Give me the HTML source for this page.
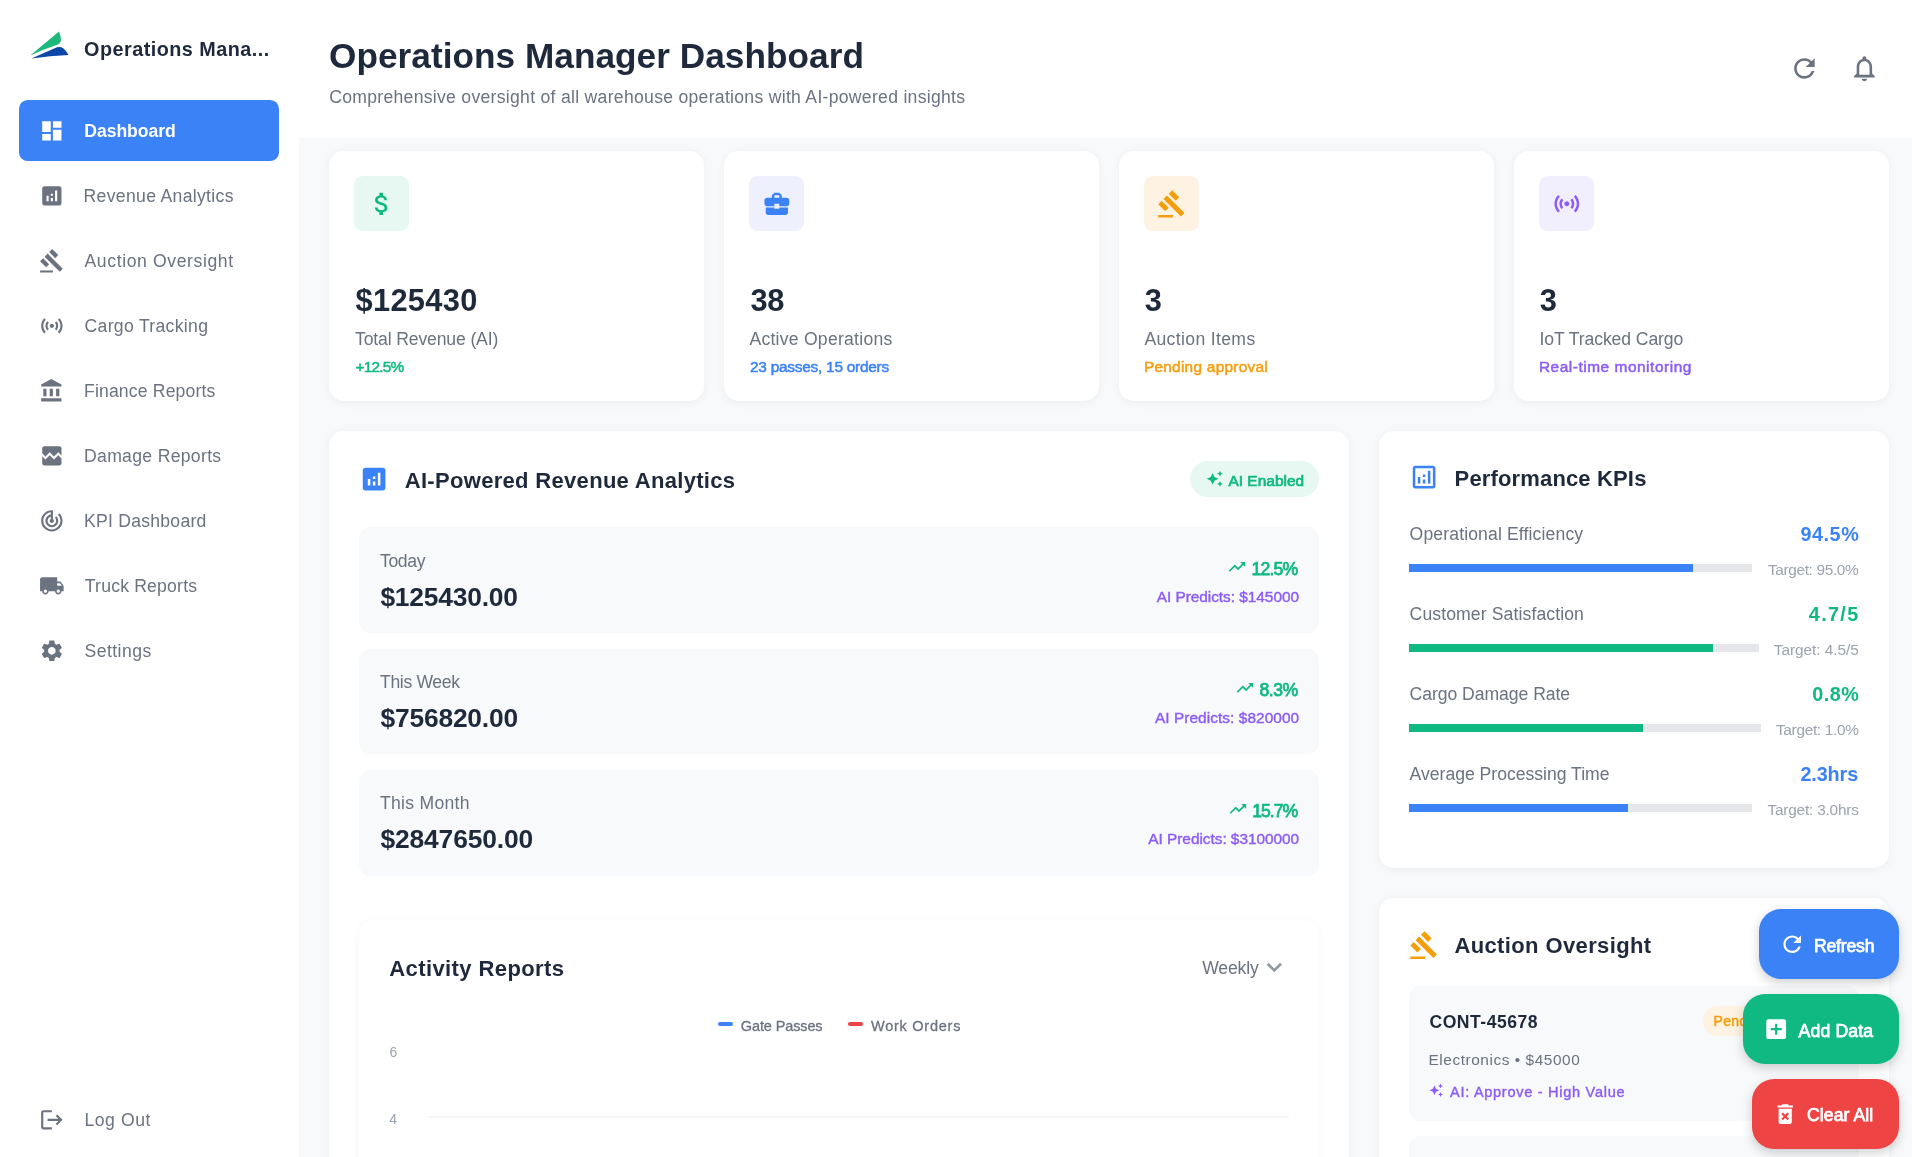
<!DOCTYPE html>
<html lang="en">
<head>
<meta charset="utf-8">
<title>Operations Manager Dashboard</title>
<style>
*{box-sizing:border-box;margin:0;padding:0}
html,body{width:1912px;height:1157px;overflow:hidden}
body{font-family:"Liberation Sans",sans-serif;background:#f8f9fb;color:#1e293b;position:relative}
.a{position:absolute}
.t{position:absolute;white-space:nowrap;line-height:1}
b.t{font-weight:700}
svg{display:block}
#w{position:absolute;left:0;top:0;width:1912px;height:1157px;will-change:transform}
</style>
</head>
<body>
<div id="w">
<div class="a" style="left:0px;top:0px;width:299px;height:1157px;background:#fff;"></div>
<svg class="a" style="left:28px;top:30px" width="44" height="32" viewBox="28 30 44 32"><path d="M30.2,55.5 L59,31.6 Q61.6,38.5 60.7,41.6 Q60,43.7 57.8,44.6 Q44,49.3 30.2,55.5Z" fill="#1db87b"/><path d="M31.4,58.5 L57,47.3 Q60.6,46.2 63.2,48.3 Q66.2,50.8 68.6,54.9 Q50,55.8 31.4,58.5Z" fill="#0b47a9"/></svg>
<b class="t" style="left:84.02px;top:40px;font-size:19.8px;color:#1e293b;letter-spacing:0.49px;">Operations Mana...</b>
<div class="a" style="left:19px;top:100px;width:260px;height:60.5px;background:#3b82f6;border-radius:8.8px;"></div>
<svg class="a" style="left:39.05px;top:117.75px" width="25.7" height="25.7" viewBox="0 0 24 24" fill="#fff"><path d="M3 13h8V3H3v10zm0 8h8v-6H3v6zm10 0h8V11h-8v10zm0-18v6h8V3h-8z"/></svg>
<b class="t" style="left:84.3px;top:123px;font-size:17.6px;color:#fff;letter-spacing:-0.06px;">Dashboard</b>
<svg class="a" style="left:39.05px;top:182.75px" width="25.7" height="25.7" viewBox="0 0 24 24" fill="#6b7280"><path d="M19 3H5c-1.1 0-2 .9-2 2v14c0 1.1.9 2 2 2h14c1.1 0 2-.9 2-2V5c0-1.1-.9-2-2-2zM9 17H7v-5h2v5zm4 0h-2v-3h2v3zm0-5h-2v-2h2v2zm4 5h-2V7h2v10z"/></svg>
<span class="t" style="left:83.6px;top:188px;font-size:17.6px;color:#6b7280;letter-spacing:0.32px;">Revenue Analytics</span>
<svg class="a" style="left:39.05px;top:247.75px" width="25.7" height="25.7" viewBox="0 0 24 24" fill="#6b7280"><path d="M1 21h12v2H1v-2zM5.245 8.07l2.83-2.827 14.14 14.142-2.828 2.828L5.245 8.07zM12.317 1l5.657 5.656-2.83 2.83-5.654-5.66L12.317 1zM3.825 9.485l5.657 5.657-2.828 2.828-5.657-5.657 2.828-2.828z"/></svg>
<span class="t" style="left:84.5px;top:253px;font-size:17.6px;color:#6b7280;letter-spacing:0.61px;">Auction Oversight</span>
<svg class="a" style="left:39.05px;top:312.75px" width="25.7" height="25.7" viewBox="0 0 24 24" fill="#6b7280"><path d="M7.76 16.24C6.67 15.16 6 13.66 6 12s.67-3.16 1.76-4.24l1.42 1.42C8.45 9.9 8 10.9 8 12c0 1.1.45 2.1 1.17 2.83l-1.41 1.41zm8.48 0C17.33 15.16 18 13.66 18 12s-.67-3.16-1.76-4.24l-1.42 1.42C15.55 9.9 16 10.9 16 12c0 1.1-.45 2.1-1.17 2.83l1.41 1.41zM12 10c-1.1 0-2 .9-2 2s.9 2 2 2 2-.9 2-2-.9-2-2-2zm8 2c0 2.21-.9 4.21-2.35 5.65l1.42 1.42C20.88 17.26 22 14.76 22 12s-1.12-5.26-2.93-7.07l-1.42 1.42C19.1 7.79 20 9.79 20 12zM6.35 6.35 4.93 4.93C3.12 6.74 2 9.24 2 12s1.12 5.26 2.93 7.07l1.42-1.42C4.9 16.21 4 14.21 4 12s.9-4.21 2.35-5.65z"/></svg>
<span class="t" style="left:84.6px;top:318px;font-size:17.6px;color:#6b7280;letter-spacing:0.31px;">Cargo Tracking</span>
<svg class="a" style="left:39.05px;top:377.75px" width="25.7" height="25.7" viewBox="0 0 24 24" fill="#6b7280"><path d="M4 10v7h3v-7H4zm6 0v7h3v-7h-3zM2 22h19v-3H2v3zm14-12v7h3v-7h-3zm-4.5-9L2 6v2h19V6l-9.5-5z"/></svg>
<span class="t" style="left:84px;top:383px;font-size:17.6px;color:#6b7280;letter-spacing:0.16px;">Finance Reports</span>
<svg class="a" style="left:39.05px;top:442.75px" width="25.7" height="25.7" viewBox="0 0 24 24" fill="#6b7280"><path d="M21 5v6.59l-3-3.01-4 4.01-4-4-4 4-3-3.01V5c0-1.1.9-2 2-2h14c1.1 0 2 .9 2 2zm-3 6.42l3 3.01V19c0 1.1-.9 2-2 2H5c-1.1 0-2-.9-2-2v-6.58l3 2.99 4-4 4 4 4-3.99z"/></svg>
<span class="t" style="left:84px;top:448px;font-size:17.6px;color:#6b7280;letter-spacing:0.32px;">Damage Reports</span>
<svg class="a" style="left:39.05px;top:507.75px" width="25.7" height="25.7" viewBox="0 0 24 24" fill="#6b7280"><path d="M19.07 4.93l-1.41 1.41C19.1 7.79 20 9.79 20 12c0 4.42-3.58 8-8 8s-8-3.58-8-8c0-4.08 3.05-7.44 7-7.93v2.02C8.16 6.57 6 9.03 6 12c0 3.31 2.69 6 6 6s6-2.69 6-6c0-1.66-.67-3.16-1.76-4.24l-1.41 1.41C15.55 9.9 16 10.9 16 12c0 2.21-1.79 4-4 4s-4-1.79-4-4c0-1.86 1.28-3.41 3-3.86v2.14c-.6.35-1 .98-1 1.72 0 1.1.9 2 2 2s2-.9 2-2c0-.74-.4-1.38-1-1.72V2h-1C6.48 2 2 6.48 2 12s4.48 10 10 10 10-4.48 10-10c0-2.76-1.12-5.26-2.93-7.07z"/></svg>
<span class="t" style="left:84px;top:513px;font-size:17.6px;color:#6b7280;letter-spacing:0.25px;">KPI Dashboard</span>
<svg class="a" style="left:39.05px;top:572.75px" width="25.7" height="25.7" viewBox="0 0 24 24" fill="#6b7280"><path d="M20 8h-3V4H3c-1.1 0-2 .9-2 2v11h2c0 1.66 1.34 3 3 3s3-1.34 3-3h6c0 1.66 1.34 3 3 3s3-1.34 3-3h2v-5l-3-4zM6 18.5c-.83 0-1.5-.67-1.5-1.5s.67-1.5 1.5-1.5 1.5.67 1.5 1.5-.67 1.5-1.5 1.5zm13.5-9l1.96 2.5H17V9.5h2.5zm-1.5 9c-.83 0-1.5-.67-1.5-1.5s.67-1.5 1.5-1.5 1.5.67 1.5 1.5-.67 1.5-1.5 1.5z"/></svg>
<span class="t" style="left:84.8px;top:578px;font-size:17.6px;color:#6b7280;letter-spacing:0.2px;">Truck Reports</span>
<svg class="a" style="left:39.05px;top:637.75px" width="25.7" height="25.7" viewBox="0 0 24 24" fill="#6b7280"><path d="M19.14 12.94c.04-.3.06-.61.06-.94 0-.32-.02-.64-.07-.94l2.03-1.58c.18-.14.23-.41.12-.61l-1.92-3.32c-.12-.22-.37-.29-.59-.22l-2.39.96c-.5-.38-1.03-.7-1.62-.94l-.36-2.54c-.04-.24-.24-.41-.48-.41h-3.84c-.24 0-.43.17-.47.41l-.36 2.54c-.59.24-1.13.57-1.62.94l-2.39-.96c-.22-.08-.47 0-.59.22L2.74 8.87c-.12.21-.08.47.12.61l2.03 1.58c-.05.3-.09.63-.09.94s.02.64.07.94l-2.03 1.58c-.18.14-.23.41-.12.61l1.92 3.32c.12.22.37.29.59.22l2.39-.96c.5.38 1.03.7 1.62.94l.36 2.54c.05.24.24.41.48.41h3.84c.24 0 .44-.17.47-.41l.36-2.54c.59-.24 1.13-.56 1.62-.94l2.39.96c.22.08.47 0 .59-.22l1.92-3.32c.12-.22.07-.47-.12-.61l-2.01-1.58zM12 15.6c-1.98 0-3.6-1.62-3.6-3.6s1.62-3.6 3.6-3.6 3.6 1.62 3.6 3.6-1.62 3.6-3.6 3.6z"/></svg>
<span class="t" style="left:84.6px;top:643px;font-size:17.6px;color:#6b7280;letter-spacing:0.43px;">Settings</span>
<svg class="a" style="left:38.65px;top:1106.55px" width="25.7" height="25.7" viewBox="0 0 24 24" fill="#6b7280"><path d="M17 7l-1.41 1.41L18.17 11H8v2h10.17l-2.58 2.58L17 17l5-5zM4 5h8V3H4c-1.1 0-2 .9-2 2v14c0 1.1.9 2 2 2h8v-2H4V5z"/></svg>
<span class="t" style="left:84.4px;top:1112.2px;font-size:17.6px;color:#6b7280;letter-spacing:0.58px;">Log Out</span>
<div class="a" style="left:299px;top:0px;width:1613px;height:138px;background:#fff;"></div>
<b class="t" style="left:329px;top:38px;font-size:35.2px;color:#1e293b;letter-spacing:0.04px;">Operations Manager Dashboard</b>
<span class="t" style="left:329.2px;top:88.6px;font-size:17.6px;color:#6b7280;letter-spacing:0.29px;">Comprehensive oversight of all warehouse operations with AI-powered insights</span>
<svg class="a" style="left:1788.85px;top:52.55px" width="30.8" height="30.8" viewBox="0 0 24 24" fill="#6b7280"><path d="M17.65 6.35C16.2 4.9 14.21 4 12 4c-4.42 0-7.99 3.58-7.99 8s3.57 8 7.99 8c3.73 0 6.84-2.55 7.73-6h-2.08c-.82 2.33-3.04 4-5.65 4-3.31 0-6-2.69-6-6s2.690-6 6-6c1.66 0 3.14.69 4.22 1.78L13 11h7V4l-2.35 2.35z"/></svg>
<svg class="a" style="left:1848.65px;top:52.6px" width="30.8" height="30.8" viewBox="0 0 24 24" fill="#6b7280"><path d="M12 22c1.1 0 2-.9 2-2h-4c0 1.1.9 2 2 2zm6-6v-5c0-3.07-1.63-5.64-4.5-6.32V4c0-.83-.67-1.5-1.5-1.5s-1.5.67-1.5 1.5v.68C7.64 5.36 6 7.92 6 11v5l-2 2v1h16v-1l-2-2zm-2 1H8v-6c0-2.48 1.51-4.5 4-4.5s4 2.02 4 4.5v6z"/></svg>
<div class="a" style="left:329px;top:151px;width:375px;height:250px;background:#fff;border-radius:15px;box-shadow:0 1.5px 10px rgba(0,0,0,.05);"></div>
<div class="a" style="left:354px;top:176px;width:55px;height:55px;background:#e7f8f2;border-radius:8.8px;"></div>
<svg class="a" style="left:366.75px;top:189.15px" width="29.7" height="29.7" viewBox="0 0 24 24" fill="#10b981"><path d="M11.8 10.9c-2.27-.59-3-1.2-3-2.15 0-1.09 1.01-1.85 2.7-1.85 1.78 0 2.44.85 2.5 2.1h2.21c-.07-1.72-1.12-3.3-3.21-3.81V3h-3v2.16c-1.94.42-3.5 1.68-3.5 3.61 0 2.31 1.91 3.46 4.7 4.13 2.5.6 3 1.48 3 2.41 0 .69-.49 1.79-2.7 1.79-2.06 0-2.87-.92-2.98-2.1h-2.2c.12 2.19 1.76 3.42 3.68 3.83V21h3v-2.15c1.95-.37 3.5-1.5 3.5-3.55 0-2.84-2.43-3.81-4.7-4.4z"/></svg>
<b class="t" style="left:355.5px;top:285.6px;font-size:30.8px;color:#1e293b;letter-spacing:0.33px;">$125430</b>
<span class="t" style="left:355px;top:331px;font-size:17.6px;color:#6b7280;letter-spacing:-0.14px;">Total Revenue (AI)</span>
<span class="t" style="left:355.5px;top:358.8px;font-size:15.4px;color:#10b981;letter-spacing:-0.79px;-webkit-text-stroke:0.5px #10b981;">+12.5%</span>
<div class="a" style="left:724px;top:151px;width:375px;height:250px;background:#fff;border-radius:15px;box-shadow:0 1.5px 10px rgba(0,0,0,.05);"></div>
<div class="a" style="left:749px;top:176px;width:55px;height:55px;background:#eef1fd;border-radius:8.8px;"></div>
<svg class="a" style="left:761.75px;top:189.15px" width="29.7" height="29.7" viewBox="0 0 24 24" fill="#3b82f6"><path d="M10 16v-1H3.01L3 19c0 1.11.89 2 2 2h14c1.11 0 2-.89 2-2v-4h-7v1h-4zm10-9h-4.01V5l-2-2h-4l-2 2v2H4c-1.1 0-2 .9-2 2v3c0 1.11.89 2 2 2h6v-2h4v2h6c1.1 0 2-.9 2-2V9c0-1.1-.9-2-2-2zm-6 0h-4V5h4v2z"/></svg>
<b class="t" style="left:750.4px;top:285.6px;font-size:30.8px;color:#1e293b;letter-spacing:-0.19px;">38</b>
<span class="t" style="left:749.4px;top:331px;font-size:17.6px;color:#6b7280;letter-spacing:0.25px;">Active Operations</span>
<span class="t" style="left:750px;top:358.8px;font-size:15.4px;color:#3b82f6;letter-spacing:-0.24px;-webkit-text-stroke:0.5px #3b82f6;">23 passes, 15 orders</span>
<div class="a" style="left:1119px;top:151px;width:375px;height:250px;background:#fff;border-radius:15px;box-shadow:0 1.5px 10px rgba(0,0,0,.05);"></div>
<div class="a" style="left:1144px;top:176px;width:55px;height:55px;background:#fef3e2;border-radius:8.8px;"></div>
<svg class="a" style="left:1156.75px;top:189.15px" width="29.7" height="29.7" viewBox="0 0 24 24" fill="#f59e0b"><path d="M1 21h12v2H1v-2zM5.245 8.07l2.83-2.827 14.14 14.142-2.828 2.828L5.245 8.07zM12.317 1l5.657 5.656-2.83 2.83-5.654-5.66L12.317 1zM3.825 9.485l5.657 5.657-2.828 2.828-5.657-5.657 2.828-2.828z"/></svg>
<b class="t" style="left:1144.66px;top:285.6px;font-size:30.8px;color:#1e293b;">3</b>
<span class="t" style="left:1144.4px;top:331px;font-size:17.6px;color:#6b7280;letter-spacing:0.35px;">Auction Items</span>
<span class="t" style="left:1143.9px;top:358.8px;font-size:15.4px;color:#f59e0b;letter-spacing:0.27px;-webkit-text-stroke:0.5px #f59e0b;">Pending approval</span>
<div class="a" style="left:1514px;top:151px;width:375px;height:250px;background:#fff;border-radius:15px;box-shadow:0 1.5px 10px rgba(0,0,0,.05);"></div>
<div class="a" style="left:1539px;top:176px;width:55px;height:55px;background:#f1effe;border-radius:8.8px;"></div>
<svg class="a" style="left:1551.75px;top:189.15px" width="29.7" height="29.7" viewBox="0 0 24 24" fill="#8b5cf6"><path d="M7.76 16.24C6.67 15.16 6 13.66 6 12s.67-3.16 1.76-4.24l1.42 1.42C8.45 9.9 8 10.9 8 12c0 1.1.45 2.1 1.17 2.83l-1.41 1.41zm8.48 0C17.33 15.16 18 13.66 18 12s-.67-3.16-1.76-4.24l-1.42 1.42C15.55 9.9 16 10.9 16 12c0 1.1-.45 2.1-1.17 2.83l1.41 1.41zM12 10c-1.1 0-2 .9-2 2s.9 2 2 2 2-.9 2-2-.9-2-2-2zm8 2c0 2.21-.9 4.21-2.35 5.65l1.42 1.42C20.88 17.26 22 14.76 22 12s-1.12-5.26-2.93-7.07l-1.42 1.42C19.1 7.79 20 9.79 20 12zM6.35 6.35 4.93 4.93C3.12 6.74 2 9.24 2 12s1.12 5.26 2.93 7.07l1.42-1.42C4.9 16.21 4 14.21 4 12s.9-4.21 2.35-5.65z"/></svg>
<b class="t" style="left:1539.66px;top:285.6px;font-size:30.8px;color:#1e293b;">3</b>
<span class="t" style="left:1539.4px;top:331px;font-size:17.6px;color:#6b7280;letter-spacing:-0.09px;">IoT Tracked Cargo</span>
<span class="t" style="left:1538.9px;top:358.8px;font-size:15.4px;color:#8b5cf6;letter-spacing:0.55px;-webkit-text-stroke:0.5px #8b5cf6;">Real-time monitoring</span>
<div class="a" style="left:329px;top:431px;width:1020px;height:800px;background:#fff;border-radius:15px;box-shadow:0 1.5px 10px rgba(0,0,0,.05);"></div>
<svg class="a" style="left:359.1px;top:463.8px" width="30.2" height="30.2" viewBox="0 0 24 24" fill="#3b82f6"><path d="M19 3H5c-1.1 0-2 .9-2 2v14c0 1.1.9 2 2 2h14c1.1 0 2-.9 2-2V5c0-1.1-.9-2-2-2zM9 17H7v-5h2v5zm4 0h-2v-3h2v3zm0-5h-2v-2h2v2zm4 5h-2V7h2v10z"/></svg>
<b class="t" style="left:404.75px;top:470px;font-size:22px;color:#1e293b;letter-spacing:0.31px;">AI-Powered Revenue Analytics</b>
<div class="a" style="left:1190.4px;top:460.7px;width:128.8px;height:36.3px;background:#e7f8f2;border-radius:18.2px;"></div>
<svg class="a" style="left:1205.6px;top:470.4px" width="17.6" height="17.6" viewBox="0 0 24 24" fill="#10b981"><path d="M19 9l1.25-2.75L23 5l-2.75-1.25L19 1l-1.25 2.75L15 5l2.75 1.25L19 9zm-7.5.5L9 4 6.5 9.5 1 12l5.5 2.5L9 20l2.5-5.500L17 12l-5.500-2.500zM19 15l-1.25 2.75L15 19l2.75 1.25L19 23l1.25-2.750L23 19l-2.750-1.250L19 15z"/></svg>
<span class="t" style="left:1228.4px;top:472.8px;font-size:15.4px;color:#10b981;letter-spacing:0.05px;-webkit-text-stroke:0.7px #10b981;">AI Enabled</span>
<div class="a" style="left:359px;top:527px;width:960px;height:106px;background:#f8f9fb;border-radius:11.5px;"></div>
<span class="t" style="left:380px;top:552.8px;font-size:17.6px;color:#6b7280;letter-spacing:-0.36px;">Today</span>
<b class="t" style="left:380.4px;top:583.6px;font-size:26.4px;color:#1e293b;letter-spacing:-0.21px;">$125430.00</b>
<svg class="a" style="left:1227.35px;top:556.95px" width="19.8" height="19.8" viewBox="0 0 24 24" fill="#10b981"><path d="M16 6l2.29 2.29-4.88 4.88-4-4L2 16.59 3.41 18l6-6 4 4 6.3-6.29L22 12V6z"/></svg>
<span class="t" style="left:1251.6px;top:560.5px;font-size:17.6px;color:#10b981;letter-spacing:-0.84px;-webkit-text-stroke:0.75px #10b981;">12.5%</span>
<span class="t" style="left:1156.7px;top:588.7px;font-size:15.4px;color:#8b5cf6;letter-spacing:-0.03px;-webkit-text-stroke:0.4px #8b5cf6;">AI Predicts: $145000</span>
<div class="a" style="left:359px;top:649px;width:960px;height:105px;background:#f8f9fb;border-radius:11.5px;"></div>
<span class="t" style="left:380px;top:674px;font-size:17.6px;color:#6b7280;letter-spacing:-0.35px;">This Week</span>
<b class="t" style="left:380.4px;top:704.8px;font-size:26.4px;color:#1e293b;letter-spacing:-0.18px;">$756820.00</b>
<svg class="a" style="left:1234.75px;top:678.15px" width="19.8" height="19.8" viewBox="0 0 24 24" fill="#10b981"><path d="M16 6l2.29 2.29-4.88 4.88-4-4L2 16.59 3.41 18l6-6 4 4 6.3-6.29L22 12V6z"/></svg>
<span class="t" style="left:1259.56px;top:681.7px;font-size:17.6px;color:#10b981;letter-spacing:-0.51px;-webkit-text-stroke:0.75px #10b981;">8.3%</span>
<span class="t" style="left:1154.9px;top:709.9px;font-size:15.4px;color:#8b5cf6;letter-spacing:0.07px;-webkit-text-stroke:0.4px #8b5cf6;">AI Predicts: $820000</span>
<div class="a" style="left:359px;top:770px;width:960px;height:106px;background:#f8f9fb;border-radius:11.5px;"></div>
<span class="t" style="left:380px;top:795.2px;font-size:17.6px;color:#6b7280;letter-spacing:0.28px;">This Month</span>
<b class="t" style="left:380.4px;top:826px;font-size:26.4px;color:#1e293b;letter-spacing:-0.12px;">$2847650.00</b>
<svg class="a" style="left:1227.75px;top:799.35px" width="19.8" height="19.8" viewBox="0 0 24 24" fill="#10b981"><path d="M16 6l2.29 2.29-4.88 4.88-4-4L2 16.59 3.41 18l6-6 4 4 6.3-6.29L22 12V6z"/></svg>
<span class="t" style="left:1252.3px;top:802.9px;font-size:17.6px;color:#10b981;letter-spacing:-1.01px;-webkit-text-stroke:0.75px #10b981;">15.7%</span>
<span class="t" style="left:1148.3px;top:831.1px;font-size:15.4px;color:#8b5cf6;letter-spacing:-0.03px;-webkit-text-stroke:0.4px #8b5cf6;">AI Predicts: $3100000</span>
<div class="a" style="left:359px;top:920.4px;width:960px;height:400px;background:#fff;border-radius:15px;box-shadow:0 1px 10px rgba(0,0,0,.04);"></div>
<b class="t" style="left:389.3px;top:957.5px;font-size:22px;color:#1e293b;letter-spacing:0.4px;">Activity Reports</b>
<span class="t" style="left:1202.2px;top:960.3px;font-size:17.6px;color:#6b7280;letter-spacing:-0.15px;">Weekly</span>
<svg class="a" style="left:1262px;top:958px" width="24" height="18" viewBox="1262 958 24 18"><polyline points="1267.6,963.8 1274.3,970.4 1281,963.8" fill="none" stroke="#9299a5" stroke-width="2.8"/></svg>
<div class="a" style="left:717.6px;top:1021.9px;width:15px;height:4.4px;background:#3b82f6;border-radius:2.2px;"></div>
<span class="t" style="left:740.8px;top:1018.7px;font-size:14.5px;color:#6b7280;letter-spacing:-0.12px;-webkit-text-stroke:0.3px #6b7280;">Gate Passes</span>
<div class="a" style="left:848px;top:1021.9px;width:15px;height:4.4px;background:#ef4444;border-radius:2.2px;"></div>
<span class="t" style="left:871px;top:1018.7px;font-size:14.5px;color:#6b7280;letter-spacing:0.75px;-webkit-text-stroke:0.3px #6b7280;">Work Orders</span>
<span class="t" style="left:389.6px;top:1045px;font-size:14px;color:#9ca3af;">6</span>
<span class="t" style="left:389.3px;top:1112px;font-size:14px;color:#9ca3af;">4</span>
<div class="a" style="left:428.9px;top:1116px;width:860px;height:2px;background:#f4f5f7;"></div>
<div class="a" style="left:1379px;top:431px;width:510px;height:437.4px;background:#fff;border-radius:15px;box-shadow:0 1.5px 10px rgba(0,0,0,.05);"></div>
<svg class="a" style="left:1409.3px;top:461.85px" width="30.2" height="30.2" viewBox="0 0 24 24" fill="#3b82f6"><path d="M19 3H5c-1.1 0-2 .9-2 2v14c0 1.1.9 2 2 2h14c1.1 0 2-.9 2-2V5c0-1.1-.9-2-2-2zm0 16H5V5h14v14zM7 12h2v5H7zm8-5h2v10h-2zm-4 7h2v3h-2zm0-4h2v2h-2z"/></svg>
<b class="t" style="left:1454.6px;top:467.8px;font-size:22px;color:#1e293b;letter-spacing:0.15px;">Performance KPIs</b>
<span class="t" style="left:1409.6px;top:526.2px;font-size:17.6px;color:#6b7280;letter-spacing:0.13px;">Operational Efficiency</span>
<b class="t" style="left:1800.6px;top:524.8px;font-size:19.8px;color:#3b82f6;letter-spacing:0.51px;">94.5%</b>
<div class="a" style="left:1409.1px;top:563.8px;width:342.8px;height:7.8px;background:#e5e7eb;"></div>
<div class="a" style="left:1409.1px;top:563.8px;width:284.4px;height:7.8px;background:#3b82f6;"></div>
<span class="t" style="left:1767.9px;top:562.2px;font-size:15.4px;color:#9ca3af;letter-spacing:-0.34px;">Target: 95.0%</span>
<span class="t" style="left:1409.6px;top:606.1px;font-size:17.6px;color:#6b7280;letter-spacing:0.11px;">Customer Satisfaction</span>
<b class="t" style="left:1808.8px;top:604.7px;font-size:19.8px;color:#10b981;letter-spacing:1.35px;">4.7/5</b>
<div class="a" style="left:1409.1px;top:643.8px;width:349.5px;height:7.8px;background:#e5e7eb;"></div>
<div class="a" style="left:1409.1px;top:643.8px;width:303.9px;height:7.8px;background:#10b981;"></div>
<span class="t" style="left:1773.8px;top:642.1px;font-size:15.4px;color:#9ca3af;letter-spacing:-0.05px;">Target: 4.5/5</span>
<span class="t" style="left:1409.6px;top:686px;font-size:17.6px;color:#6b7280;letter-spacing:-0.05px;">Cargo Damage Rate</span>
<b class="t" style="left:1812.3px;top:684.6px;font-size:19.8px;color:#10b981;letter-spacing:0.45px;">0.8%</b>
<div class="a" style="left:1409.1px;top:723.8px;width:351.6px;height:7.8px;background:#e5e7eb;"></div>
<div class="a" style="left:1409.1px;top:723.8px;width:234.2px;height:7.8px;background:#10b981;"></div>
<span class="t" style="left:1776px;top:722px;font-size:15.4px;color:#9ca3af;letter-spacing:-0.32px;">Target: 1.0%</span>
<span class="t" style="left:1409.6px;top:765.9px;font-size:17.6px;color:#6b7280;letter-spacing:-0.01px;">Average Processing Time</span>
<b class="t" style="left:1800.4px;top:764.5px;font-size:19.8px;color:#3b82f6;letter-spacing:-0.1px;">2.3hrs</b>
<div class="a" style="left:1409.1px;top:803.8px;width:342.9px;height:7.8px;background:#e5e7eb;"></div>
<div class="a" style="left:1409.1px;top:803.8px;width:218.9px;height:7.8px;background:#3b82f6;"></div>
<span class="t" style="left:1767.5px;top:801.9px;font-size:15.4px;color:#9ca3af;letter-spacing:-0.21px;">Target: 3.0hrs</span>
<div class="a" style="left:1379px;top:898.4px;width:510px;height:400px;background:#fff;border-radius:15px;box-shadow:0 1.5px 10px rgba(0,0,0,.05);"></div>
<svg class="a" style="left:1408.95px;top:930.1px" width="30.2" height="30.2" viewBox="0 0 24 24" fill="#f59e0b"><path d="M1 21h12v2H1v-2zM5.245 8.07l2.83-2.827 14.14 14.142-2.828 2.828L5.245 8.07zM12.317 1l5.657 5.656-2.83 2.83-5.654-5.66L12.317 1zM3.825 9.485l5.657 5.657-2.828 2.828-5.657-5.657 2.828-2.828z"/></svg>
<b class="t" style="left:1454.38px;top:934.9px;font-size:22px;color:#1e293b;letter-spacing:0.38px;">Auction Oversight</b>
<div class="a" style="left:1409px;top:985.5px;width:450px;height:135px;background:#f8f9fb;border-radius:11.5px;"></div>
<div class="a" style="left:1409px;top:1136.1px;width:450px;height:135px;background:#f8f9fb;border-radius:11.5px;"></div>
<b class="t" style="left:1429.5px;top:1013.7px;font-size:17.6px;color:#1e293b;letter-spacing:0.49px;">CONT-45678</b>
<div class="a" style="left:1702.7px;top:1006.2px;width:86px;height:29.7px;background:#fef3e2;border-radius:14.85px;"></div>
<span class="t" style="left:1713.4px;top:1013.9px;font-size:14px;color:#f59e0b;letter-spacing:0.42px;-webkit-text-stroke:0.5px #f59e0b;">Pending</span>
<span class="t" style="left:1428.5px;top:1052px;font-size:15.4px;color:#6b7280;letter-spacing:0.56px;">Electronics • $45000</span>
<svg class="a" style="left:1429.4px;top:1083.3px" width="14.5" height="14.5" viewBox="0 0 24 24" fill="#8b5cf6"><path d="M19 9l1.25-2.75L23 5l-2.75-1.25L19 1l-1.25 2.75L15 5l2.75 1.25L19 9zm-7.5.5L9 4 6.5 9.5 1 12l5.5 2.5L9 20l2.5-5.500L17 12l-5.500-2.500zM19 15l-1.25 2.75L15 19l2.75 1.25L19 23l1.25-2.750L23 19l-2.750-1.250L19 15z"/></svg>
<span class="t" style="left:1450px;top:1084.5px;font-size:14.5px;color:#8b5cf6;letter-spacing:0.73px;-webkit-text-stroke:0.4px #8b5cf6;">AI: Approve - High Value</span>
<div class="a" style="left:1759px;top:909px;width:140px;height:69.8px;background:#3b82f6;border-radius:22px;box-shadow:0 4px 11px rgba(0,0,0,.19);"></div>
<svg class="a" style="left:1778.7px;top:931.1px" width="26.4" height="26.4" viewBox="0 0 24 24" fill="#fff"><path d="M17.65 6.35C16.2 4.9 14.21 4 12 4c-4.42 0-7.99 3.58-7.99 8s3.57 8 7.99 8c3.73 0 6.84-2.55 7.73-6h-2.08c-.82 2.33-3.04 4-5.65 4-3.31 0-6-2.69-6-6s2.690-6 6-6c1.66 0 3.14.69 4.22 1.78L13 11h7V4l-2.35 2.35z"/></svg>
<span class="t" style="left:1813.9px;top:937.6px;font-size:17.6px;color:#fff;letter-spacing:-0.17px;-webkit-text-stroke:0.75px #fff;">Refresh</span>
<div class="a" style="left:1742.9px;top:994.1px;width:156.1px;height:69.6px;background:#10b981;border-radius:22px;box-shadow:0 4px 11px rgba(0,0,0,.19);"></div>
<svg class="a" style="left:1762.85px;top:1016.15px" width="26.4" height="26.4" viewBox="0 0 24 24" fill="#fff"><path d="M19 3H5c-1.11 0-2 .9-2 2v14c0 1.1.89 2 2 2h14c1.1 0 2-.9 2-2V5c0-1.1-.9-2-2-2zm-2 10h-4v4h-2v-4H7v-2h4V7h2v4h4v2z"/></svg>
<span class="t" style="left:1798.6px;top:1022.5px;font-size:17.6px;color:#fff;letter-spacing:0.16px;-webkit-text-stroke:0.75px #fff;">Add Data</span>
<div class="a" style="left:1752px;top:1079px;width:147px;height:69.6px;background:#ef4444;border-radius:22px;box-shadow:0 4px 11px rgba(0,0,0,.19);"></div>
<svg class="a" style="left:1771.5px;top:1101.4px" width="26.4" height="26.4" viewBox="0 0 24 24" fill="#fff"><path d="M6 19c0 1.1.9 2 2 2h8c1.1 0 2-.9 2-2V7H6v12zm2.46-7.12l1.41-1.41L12 12.590l2.120-2.120 1.410 1.410L13.410 14l2.120 2.120-1.410 1.410L12 15.410l-2.120 2.120-1.410-1.410L10.590 14l-2.130-2.120zM15.500 4l-1-1h-5l-1 1H5v2h14V4z"/></svg>
<span class="t" style="left:1807px;top:1107.4px;font-size:17.6px;color:#fff;letter-spacing:0.09px;-webkit-text-stroke:0.75px #fff;">Clear All</span>
</div>
</body>
</html>
